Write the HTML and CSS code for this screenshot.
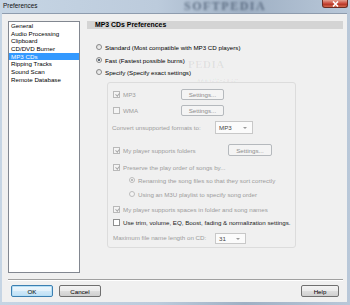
FILE: index.html
```html
<!DOCTYPE html>
<html>
<head>
<meta charset="utf-8">
<title>Preferences</title>
<link rel="stylesheet" href="styles.css">
</head>
<body>
<div class="window">
  <div class="titlebar">
    <span class="title">Preferences</span>
    <span class="wm-title">SOFTPEDIA</span>
    <div class="close">
      <svg width="9" height="6" viewBox="0 0 9 6"><path d="M2 0.5 L7 5.5 M7 0.5 L2 5.5" stroke="#fff" stroke-width="1.6" fill="none"/></svg>
    </div>
  </div>
  <div class="client">
    <div class="main">
      <ul class="list">
        <li>General</li>
        <li>Audio Processing</li>
        <li>Clipboard</li>
        <li>CD/DVD Burner</li>
        <li class="sel">MP3 CDs</li>
        <li>Ripping Tracks</li>
        <li>Sound Scan</li>
        <li>Remote Database</li>
      </ul>
      <div class="pane">
        <div class="header">MP3 CDs Preferences</div>
        <span class="wm wm-big">PEDIA</span>
        <span class="wm wm-url">www.softpedia.com</span>
        <div class="opt opt-standard"><span class="radio"></span>Standard (Most compatible with MP3 CD players)</div>
        <div class="opt opt-fast"><span class="radio on"></span>Fast (Fastest possible burns)</div>
        <div class="opt opt-specify"><span class="radio"></span>Specify (Specify exact settings)</div>
        <div class="group">
          <div class="grow r-mp3">
            <span class="cell w-fmt"><span class="chk dis checked"></span>MP3</span>
            <span class="btn-dis w-set1">Settings...</span>
          </div>
          <div class="grow r-wma">
            <span class="cell w-fmt"><span class="chk dis"></span>WMA</span>
            <span class="btn-dis w-set1">Settings...</span>
          </div>
          <div class="grow r-conv">
            <span class="cell w-lbl lbl-shift">Convert unsupported formats to:</span>
            <span class="combo w-combo1">MP3<span class="arrow"></span></span>
          </div>
          <div class="grow r-fold">
            <span class="cell w-fold"><span class="chk dis checked"></span>My player supports folders</span>
            <span class="btn-dis w-set2">Settings...</span>
          </div>
          <div class="grow r-pres">
            <span class="cell"><span class="chk dis checked"></span>Preserve the play order of songs by...</span>
          </div>
          <div class="grow r-ren sub">
            <span class="cell"><span class="radio dis on"></span>Renaming the song files so that they sort correctly</span>
          </div>
          <div class="grow r-m3u sub">
            <span class="cell"><span class="radio dis"></span>Using an M3U playlist to specify song order</span>
          </div>
          <div class="grow r-spc">
            <span class="cell"><span class="chk dis checked"></span>My player supports spaces in folder and song names</span>
          </div>
          <div class="grow r-trim enabled">
            <span class="cell"><span class="chk"></span>Use trim, volume, EQ, Boost, fading &amp; normalization settings.</span>
          </div>
          <div class="grow r-max">
            <span class="cell w-lbl">Maximum file name length on CD:</span>
            <span class="combo w-combo2">31<span class="arrow"></span></span>
          </div>
        </div>
      </div>
    </div>
    <div class="sep"></div>
    <div class="buttons">
      <span class="btn default">OK</span>
      <span class="btn">Cancel</span>
      <span class="spacer"></span>
      <span class="btn">Help</span>
    </div>
  </div>
</div>
</body>
</html>
```

FILE: styles.css
```css
* { box-sizing: border-box; }
html, body {
  margin: 0;
  padding: 0;
  width: 350px;
  height: 305px;
  overflow: hidden;
}
body {
  font-family: "Liberation Sans", Arial, sans-serif;
  font-size: 6.2px;
  color: #000;
}
.window {
  width: 350px;
  height: 305px;
  display: flex;
  flex-direction: column;
  background: linear-gradient(90deg, #c6d5e4 0%, #bccbdc 45%, #9fb0c4 70%, #b9c8d9 100%);
}
.titlebar {
  height: 13px;
  position: relative;
  flex: none;
  overflow: hidden;
}
.title {
  position: absolute;
  left: 3px;
  top: 2px;
  font-size: 6.4px;
  line-height: 8px;
  color: #111;
}
.wm-title {
  position: absolute;
  left: 184px;
  top: 0;
  font-family: "Liberation Serif", serif;
  font-weight: bold;
  font-size: 12px;
  line-height: 13px;
  letter-spacing: 1.5px;
  color: rgba(50, 66, 90, 0.6);
  filter: blur(1.2px);
}
.close {
  position: absolute;
  left: 322px;
  top: 0;
  width: 26px;
  height: 8px;
  border: 1px solid #6b2b22;
  border-top: none;
  border-radius: 0 0 3px 3px;
  background: linear-gradient(#e3a091, #c9493a 50%, #b33626 60%, #d66a4f);
  display: flex;
  align-items: center;
  justify-content: center;
}
.client {
  flex: 1;
  margin: 0 3px 3px 2px;
  background: #f0f0f0;
  border-top: 1px solid #8e9cae;
  display: flex;
  flex-direction: column;
  padding: 7px 4px 0 6px;
}
.main {
  display: flex;
  height: 252px;
  flex: none;
}
.list {
  list-style: none;
  margin: 0;
  padding: 0;
  width: 72px;
  height: 252px;
  background: #fff;
  border: 1px solid #828790;
  flex: none;
}
.list li {
  height: 7.7px;
  line-height: 7.7px;
  padding-left: 2px;
  white-space: nowrap;
}
.list li.sel {
  background: #3399ff;
  color: #fff;
}
.pane {
  margin-left: 7px;
  width: 256px;
  position: relative;
  display: flex;
  flex-direction: column;
}
.header {
  height: 8px;
  line-height: 8px;
  background: #d4d4d4;
  padding-left: 8px;
  font-weight: bold;
  font-size: 6.9px;
  flex: none;
}
.wm {
  position: absolute;
  color: rgba(0, 0, 0, 0.07);
  white-space: nowrap;
  pointer-events: none;
}
.wm-big {
  left: 101px;
  top: 38px;
  font-family: "Liberation Serif", serif;
  font-weight: bold;
  font-size: 11px;
  line-height: 10px;
  letter-spacing: 0.5px;
}
.wm-url {
  left: 110px;
  top: 57px;
  font-size: 5px;
  line-height: 5px;
}
.opt {
  height: 10px;
  display: flex;
  align-items: center;
  padding-left: 9px;
  white-space: nowrap;
  flex: none;
}
.opt-standard { margin-top: 13px; }
.opt-fast { margin-top: 3px; }
.opt-specify { margin-top: 2px; }
.radio {
  width: 6px;
  height: 6px;
  border-radius: 50%;
  border: 1px solid #8a8a8a;
  background: linear-gradient(135deg, #d8d8d8, #fbfbfb);
  margin-right: 3px;
  flex: none;
  display: flex;
  align-items: center;
  justify-content: center;
}
.radio.on::after {
  content: "";
  width: 2.6px;
  height: 2.6px;
  border-radius: 50%;
  background: #2c3e50;
}
.radio.dis {
  border-color: #bcbcbc;
  background: #f4f4f4;
}
.radio.dis.on::after {
  background: #a9a9a9;
}
.group {
  margin-top: 5px;
  margin-left: 20px;
  width: 189px;
  border: 1px solid #dcdcdc;
  border-radius: 3px;
  padding: 5px 0 4px 5px;
  display: flex;
  flex-direction: column;
  color: #9c9c9c;
}
.grow {
  height: 12px;
  display: flex;
  align-items: center;
  white-space: nowrap;
  flex: none;
}
.grow.enabled { color: #1a1a1a; }
.r-wma { margin-top: 4px; }
.r-conv { margin-top: 5px; height: 13px; }
.r-fold { margin-top: 10px; }
.r-pres { margin-top: 5px; }
.r-ren { margin-top: 1px; }
.r-m3u { margin-top: 2px; }
.r-spc { margin-top: 3px; }
.r-trim { margin-top: 1px; }
.r-max { margin-top: 3px; }
.sub { padding-left: 16px; }
.cell {
  display: flex;
  align-items: center;
  flex: none;
}
.w-fmt { width: 68px; }
.w-lbl { width: 102px; }
.w-fold { width: 115px; }
.lbl-shift { margin-left: -1px; width: 103px; }
.chk {
  width: 7px;
  height: 7px;
  border: 1px solid #8e8f8f;
  background: #fff;
  margin-right: 3px;
  flex: none;
  position: relative;
}
.chk.dis {
  border-color: #b9b9b9;
  background: #f4f4f4;
}
.chk.checked::after {
  content: "";
  position: absolute;
  left: 1.6px;
  top: 0.2px;
  width: 1.6px;
  height: 3.4px;
  border: solid #a8a8a8;
  border-width: 0 1px 1px 0;
  transform: rotate(40deg);
}
.btn-dis {
  height: 11px;
  border: 1px solid #b5b9bd;
  border-radius: 2px;
  background: #f4f4f4;
  color: #8d8d8d;
  display: flex;
  align-items: center;
  justify-content: center;
  flex: none;
}
.w-set1 { width: 43px; }
.w-set2 { width: 44px; height: 12px; }
.combo {
  height: 13px;
  border: 1px solid #c8c8c8;
  background: #fbfbfb;
  color: #444;
  display: flex;
  align-items: center;
  padding-left: 3px;
  position: relative;
  flex: none;
}
.w-combo1 { width: 38px; }
.w-combo2 { width: 31px; height: 11px; margin-top: 3px; }
.arrow {
  position: absolute;
  right: 5px;
  top: 50%;
  margin-top: -1px;
  border-left: 2px solid transparent;
  border-right: 2px solid transparent;
  border-top: 2px solid #9a9a9a;
}
.sep {
  margin-top: 6px;
  height: 2px;
  border-top: 1px solid #a0a0a0;
  border-bottom: 1px solid #fff;
  flex: none;
}
.buttons {
  margin-top: 4px;
  height: 12px;
  display: flex;
  flex: none;
  padding: 0 4px 0 3px;
}
.btn {
  width: 42px;
  height: 12px;
  border: 1px solid #707070;
  border-radius: 2px;
  background: linear-gradient(#f3f3f3, #ebebeb 48%, #dddddd 52%, #cfcfcf);
  display: flex;
  align-items: center;
  justify-content: center;
  margin-right: 6px;
  flex: none;
}
.btn.default {
  border-color: #3c7fb1;
  box-shadow: inset 0 0 0 1px #b7dff5;
  background: linear-gradient(#eef7fc, #e3f1fb 48%, #cfe8f8 52%, #bfe0f6);
}
.spacer { flex: 1; }
.buttons .btn:last-child { margin-right: 0; width: 38px; }
```
